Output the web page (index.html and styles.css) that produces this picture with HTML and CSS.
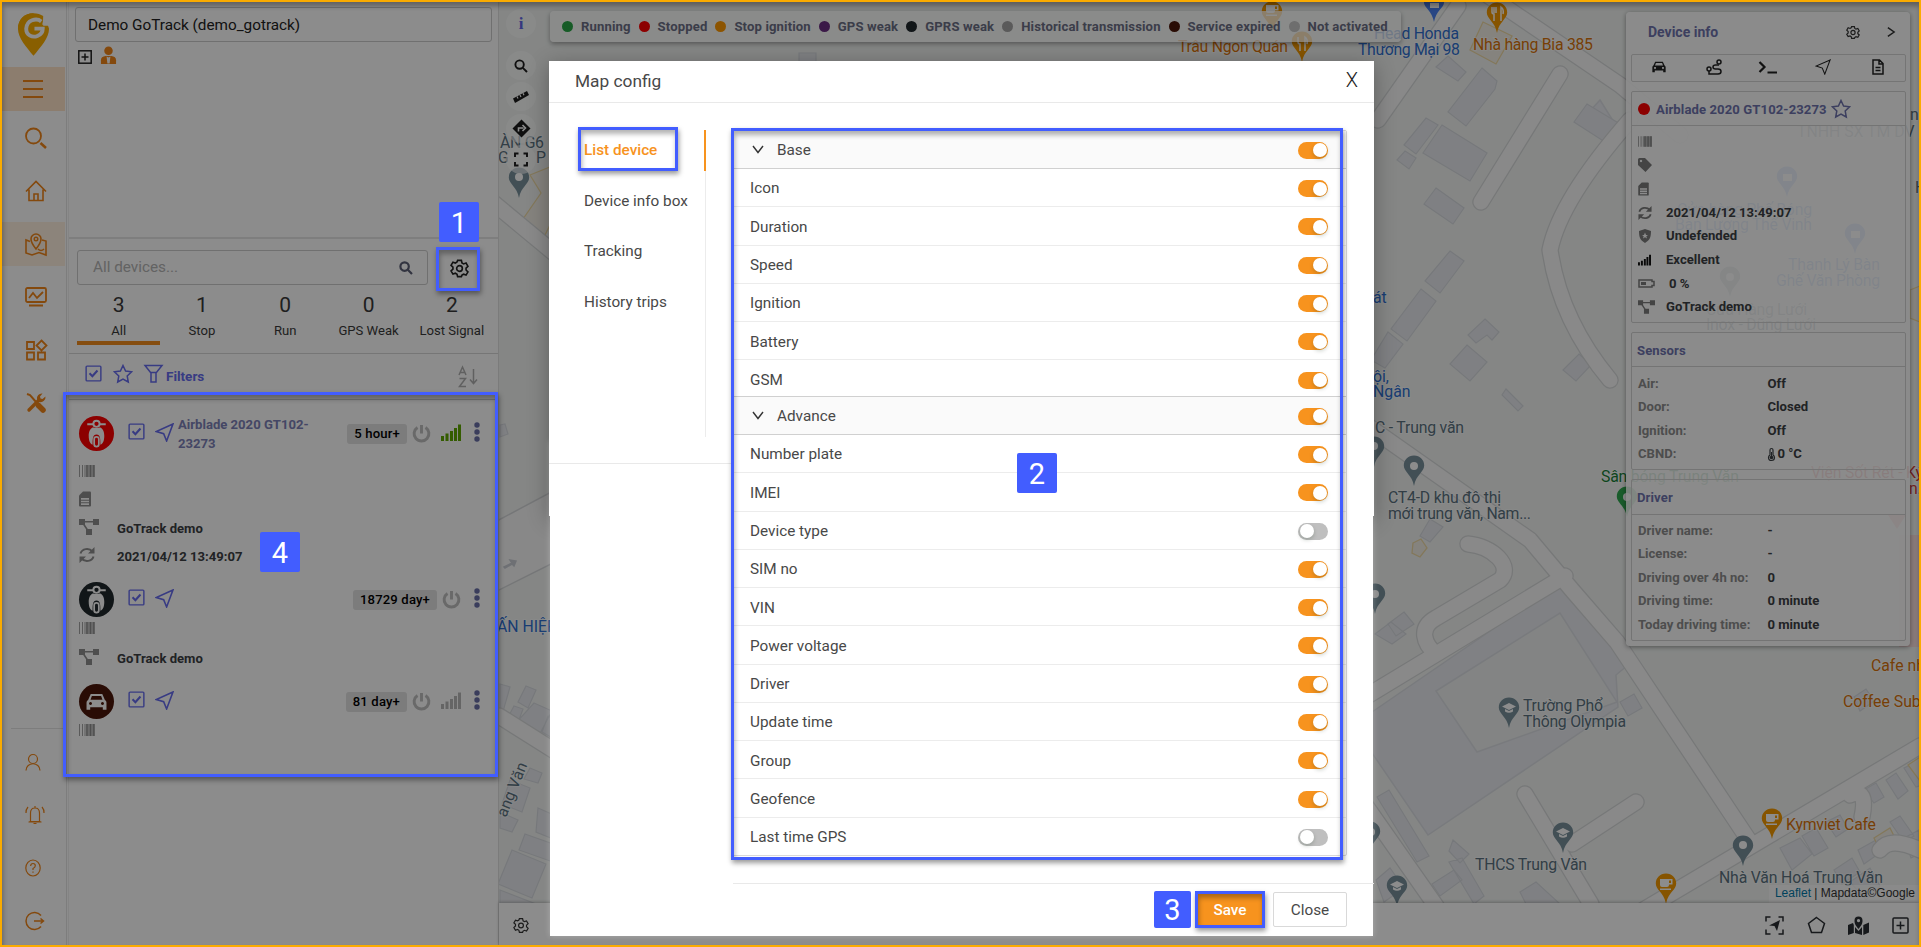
FILE: index.html
```html
<!DOCTYPE html>
<html lang="en">
<head>
<meta charset="utf-8">
<title>GoTrack - Map config</title>
<link rel="stylesheet" href="styles.css">
</head>
<body>
<svg class="defs" width="0" height="0">
  <defs>
    <symbol id="gear" viewBox="0 0 20 20"><path d="M8 1.5h4l.6 2.7 1.7 1 2.6-.9 2 3.400-2 1.900v2l2 1.900-2 3.400-2.600-.9-1.700 1L12 18.500H8l-.6-2.500-1.700-1-2.600.9-2-3.400 2-1.900v-2l-2-1.900 2-3.400 2.600.9 1.700-1z"/><circle cx="10" cy="10" r="3"/></symbol>
    <symbol id="check" viewBox="0 0 18 18"><rect x="1.200" y="1.200" width="15.600" height="15.600" rx="1"/><path d="M4.800 8.800l3 3 5.400-6" stroke-width="2.200"/></symbol>
    <symbol id="nav" viewBox="0 0 18 18"><path d="M17 1L1.200 8l7 2.200L11 17z"/></symbol>
    <symbol id="star" viewBox="0 0 20 20"><path d="M10 1.500l2.600 5.500 6 .8-4.400 4.200 1.100 6-5.300-2.900L4.700 18l1.100-6L1.400 7.800l6-.8z"/></symbol>
    <symbol id="glass" viewBox="0 0 14 14"><circle cx="5.600" cy="5.600" r="4.200"/><path d="M8.800 8.800l4.200 4.200"/></symbol>
    <symbol id="scooter" viewBox="0 0 36 36"><circle cx="18" cy="8" r="3.200" fill="none" stroke="#fff" stroke-width="2"/><path d="M8.500 8.500h6M21.500 8.500h6" stroke="#fff" stroke-width="2.200" fill="none"/><path d="M14.500 11.500c-4 2-4.500 6-4.500 9 0 4 1 8 4 9 0-6 0-10.500 4-10.500s4 4.500 4 10.500c3-1 4-5 4-9 0-3-.5-7-4.500-9-1.500 1.200-5.500 1.200-7 0z" fill="#fff"/><rect x="15.600" y="21.500" width="4.800" height="10" rx="2.400" fill="none" stroke="#fff" stroke-width="1.800"/></symbol>
    <symbol id="power" viewBox="0 0 18 18"><path d="M5.200 3.300a7 7 0 1 0 7.600 0M9 1v8"/></symbol>
    <symbol id="signal" viewBox="0 0 20 17"><path d="M1.500 17v-5M6 17V9.500M10.500 17V7M14.500 17V4M18.500 17V.5" stroke-width="3"/></symbol>
    <symbol id="dots" viewBox="0 0 6 20"><circle cx="3" cy="3" r="2.700"/><circle cx="3" cy="10" r="2.700"/><circle cx="3" cy="17" r="2.700"/></symbol>
    <symbol id="barcode" viewBox="0 0 16 12"><path d="M.5 0v12M3.500 0v12M6 0v12" stroke-width="1" opacity=".8"/><path d="M8 0v12M11.500 0v12M14.800 0v12" stroke-width="1.300"/><path d="M7 0h9v12H7z" fill="currentColor" opacity=".55" stroke="none"/></symbol>
    <symbol id="sim" viewBox="0 0 12 16"><path d="M4 .5h7q1 0 1 1v13q0 1-1 1H1q-1 0-1-1V4.500z"/><path d="M2 7h8v1.800H2zM2 9.800h8v1.500H2zM2 12.300h8V14H2z" fill="#fff"/></symbol>
    <symbol id="tree" viewBox="0 0 20 16"><path d="M0 0h6v6H0zM14 0h6v6h-6zM7 10h6v6H7z"/><path d="M5 2.800h10M4.500 5l4 6" fill="none" stroke="currentColor" stroke-width="1.600"/></symbol>
    <symbol id="sync" viewBox="0 0 16 16"><path d="M1.500 6.500C3 1.500 10 .5 13.500 4.500M14.500 9.500C13 14.500 6 15.500 2.500 11.500"/><path d="M15.500 0v6.500H9zM.5 16V9.500H7z" fill="currentColor" stroke="none"/></symbol>
    <symbol id="carfront" viewBox="0 0 20 16"><path fill-rule="evenodd" d="M4.500.5h11l2.500 5.500q1.500.8 1.500 2.500v7h-3.500V13h-12v2.500H.5v-7Q.5 6.800 2 6zM5.600 2.300L4.300 5.800h11.400l-1.300-3.500zM4.300 8a1.400 1.400 0 1 0 .01 0zM15.700 8a1.400 1.400 0 1 0 .01 0z"/></symbol>
    <symbol id="pin" viewBox="0 0 22 32"><path d="M11 .5C5 .5.800 5 .800 10.500.800 17 9 19.500 11 31c2-11.500 10.200-14 10.200-20.500C21.200 5 17 .5 11 .5z"/></symbol>
    <symbol id="cap" viewBox="0 0 14 10"><path d="M7 0l7 3.500L7 7 0 3.500zM3 6v2.500q4 2.500 8 0V6L7 8z"/></symbol>
    <symbol id="cup" viewBox="0 0 14 11"><path fill-rule="evenodd" d="M1 0h12.500v5.500H10V6q0 2-2 2H3Q1 8 1 6zM10 1.500v2.500h2V1.500zM1 9.500h11v1.500H1z"/></symbol>
  </defs>
</svg>

<div class="app">
  <nav class="rail">
    <svg class="logo" viewBox="0 0 34 46"><path d="M17 1C7 1 1 8 1 17c0 10 9 19 16 28 7-9 16-18 16-28L32 14H17z" fill="#faad00"/><path d="M1 17C1 8 7 1 17 1q6 0 10 3v12L17 28z" fill="#faad00"/><path d="M25 9.500C20 5.500 10 8 9.500 17c0 7 6.500 9.500 11.500 7.500 4-1.500 5.500-4.500 5.500-7.500H18" fill="none" stroke="#fff" stroke-width="4"/><path d="M28 3l5 10h-7z" fill="#fff"/></svg>
    <div class="rail-toggle"><svg width="22" height="20" viewBox="0 0 22 20"><path d="M1 2h20M1 10h20M1 18h20"/></svg></div>
    <div class="rail-menu">
      <div class="rail-item"><svg width="22" height="22" viewBox="0 0 22 22"><circle cx="8.500" cy="9" r="7.500"/><path d="M15.500 16l5.500 5" stroke-width="2.500"/></svg></div>
      <div class="rail-item"><svg width="22" height="22" viewBox="0 0 22 22"><path d="M1 11.500L11 1.500l10 10M4 9.500V20.500h14V9.500M9 20v-6h4v6" stroke-width="1.600"/></svg></div>
      <div class="rail-item rail-item-active"><svg width="24" height="24" viewBox="0 0 24 24"><path d="M6 9.500L2 8v13l6 2 7-2.500 7 2.500V9l-4-1M12 17C8 12 7 10 7 7a5 5 0 0 1 10 0c0 3-1 5-5 10zM14 17q3 3 6 0" stroke-width="1.600"/><circle cx="12" cy="7" r="1.800" stroke-width="1.400"/></svg></div>
      <div class="rail-item"><svg width="22" height="20" viewBox="0 0 22 20"><rect x="1" y="1" width="20" height="14" rx="1.500"/><path d="M4 11l4-5 4 5 6-6M4 18.500h14" stroke-width="1.800"/></svg></div>
      <div class="rail-item"><svg width="22" height="22" viewBox="0 0 22 22"><path d="M2 3h7v7H2zM2 13.500h7v7H2zM13 13.500h7v7h-7zM16.500 1.500l5 5-5 5-5-5z"/></svg></div>
      <div class="rail-item"><svg width="20" height="20" viewBox="0 0 20 20"><path d="M3 17L13 7" stroke-width="3.400" stroke-linecap="round"/><path d="M11 6.500a5 5 0 0 1 5.500-6L14 3.500l.5 2 2 .5L19.500 3.500a5 5 0 0 1-6 5.500z" fill="currentColor" stroke="none"/><path d="M1 1l3 1 6.500 7.500" stroke-width="2"/><path d="M12.500 12.500l4.500 4.500" stroke-width="5.500" stroke-linecap="round"/></svg></div>
    </div>
    <div class="rail-foot">
      <svg width="16" height="18" viewBox="0 0 16 18"><circle cx="8" cy="6" r="4.500"/><path d="M1 17.500C1 8.500 15 8.500 15 17.500"/></svg>
      <svg width="20" height="20" viewBox="0 0 20 20"><path d="M10 1v2M4.500 16.500h11M5.500 16V8q0-5 4.500-5t4.500 5v8M3.500 17h13M8.500 18.500h3M3 2Q.5 5 1 8M17 2q2.500 3 2 6"/></svg>
      <svg width="16" height="18" viewBox="0 0 16 18"><ellipse cx="8" cy="9" rx="7.200" ry="8"/><path d="M5.600 7Q5.800 4.500 8 4.500q2.300 0 2.300 2.200Q10.300 8.300 8 9.500V11M8 12.500v1.300"/></svg>
      <svg width="20" height="20" viewBox="0 0 20 20"><path d="M16 4.500a8.500 8.500 0 1 0 0 11M9 10h9.500M15.500 7.500L18.500 10l-3 2.500" stroke-width="1.500"/></svg>
    </div>
  </nav>

  <aside class="side">
    <section class="accounts">
      <div class="account-box">Demo GoTrack (demo_gotrack)</div>
      <div class="account-tree">
        <svg width="14" height="14" viewBox="0 0 14 14" class="ink"><rect x=".8" y=".8" width="12.400" height="12.400"/><path d="M7 3.500v7M3.500 7h7"/></svg>
        <svg width="17" height="19" viewBox="0 0 18 19" class="person"><circle cx="9" cy="4.500" r="4.500"/><path d="M1 18.500v-4Q1 10.500 6 10h6q5 .5 5 4.500v4z"/><path d="M7 10.500l2 1 2-1-.8 7.500H7.800z" fill="#fff"/></svg>
      </div>
    </section>
    <section class="finder">
      <div class="search-row">
        <div class="search"><span>All devices...</span><svg width="14" height="14"><use href="#glass"/></svg></div>
        <svg class="gear-btn" width="19" height="19"><use href="#gear"/></svg>
      </div>
      <div class="stats">
        <div class="stat stat-on"><b>3</b><span>All</span></div>
        <div class="stat"><b>1</b><span>Stop</span></div>
        <div class="stat"><b>0</b><span>Run</span></div>
        <div class="stat"><b>0</b><span>GPS Weak</span></div>
        <div class="stat"><b>2</b><span>Lost Signal</span></div>
      </div>
    </section>
    <div class="filters">
      <svg width="17" height="17"><use href="#check"/></svg>
      <svg width="20" height="20"><use href="#star"/></svg>
      <svg width="19" height="19" viewBox="0 0 19 19"><path d="M1 1.500h17l-6 7.500v9H7V9zM6.500 8.500h6"/></svg>
      <span>Filters</span>
      <svg class="sort" width="20" height="22" viewBox="0 0 20 22"><path d="M1 9L4.500 1 8 9M2 6.500h5M1.500 12.500h6l-6 8h6.500M15.500 3v14M12 13.500l3.500 4 3.500-4"/></svg>
    </div>
    <div class="devices">
      <div class="device">
        <div class="device-head">
          <span class="avatar red"><svg width="35" height="35"><use href="#scooter"/></svg></span>
          <svg class="ico-line" width="17" height="17"><use href="#check"/></svg>
          <svg class="ico-nav" width="19" height="19"><use href="#nav"/></svg>
          <span class="device-name">Airblade 2020 GT102-23273</span>
          <span class="badge">5 hour+</span>
          <svg class="ico-power" width="19" height="19"><use href="#power"/></svg>
          <svg class="ico-signal on" width="20" height="17"><use href="#signal"/></svg>
          <svg class="ico-dots" width="6" height="20"><use href="#dots"/></svg>
        </div>
        <div class="drow"><svg class="bar" width="16" height="12"><use href="#barcode"/></svg></div>
        <div class="drow"><svg width="12" height="16"><use href="#sim"/></svg></div>
        <div class="drow"><svg width="20" height="16"><use href="#tree"/></svg><b>GoTrack demo</b></div>
        <div class="drow"><svg class="sync" width="16" height="16"><use href="#sync"/></svg><b>2021/04/12 13:49:07</b></div>
      </div>
      <div class="device device-2">
        <div class="device-head">
          <span class="avatar black"><svg width="35" height="35"><use href="#scooter"/></svg></span>
          <svg class="ico-line" width="17" height="17"><use href="#check"/></svg>
          <svg class="ico-nav" width="19" height="19"><use href="#nav"/></svg>
          <span class="device-name"></span>
          <span class="badge">18729 day+</span>
          <svg class="ico-power" width="19" height="19"><use href="#power"/></svg>
          <svg class="ico-dots" width="6" height="20"><use href="#dots"/></svg>
        </div>
        <div class="drow"><svg class="bar" width="16" height="12"><use href="#barcode"/></svg></div>
        <div class="drow"><svg width="20" height="16"><use href="#tree"/></svg><b>GoTrack demo</b></div>
      </div>
      <div class="device device-3">
        <div class="device-head">
          <span class="avatar brown"><svg width="21" height="20"><use href="#carfront"/></svg></span>
          <svg class="ico-line" width="17" height="17"><use href="#check"/></svg>
          <svg class="ico-nav" width="19" height="19"><use href="#nav"/></svg>
          <span class="device-name"></span>
          <span class="badge">81 day+</span>
          <svg class="ico-power" width="19" height="19"><use href="#power"/></svg>
          <svg class="ico-signal" width="20" height="17"><use href="#signal"/></svg>
          <svg class="ico-dots" width="6" height="20"><use href="#dots"/></svg>
        </div>
        <div class="drow"><svg class="bar" width="16" height="12"><use href="#barcode"/></svg></div>
      </div>
    </div>
  </aside>

  <main class="stage">
    <div class="map">
      <svg class="map-canvas" width="1420" height="901" viewBox="499 2 1420 901">
        <rect x="499" y="2" width="1420" height="901" fill="#f2f5f3" stroke="none"/>
        <g class="campus">
          <path d="M1372 712l188-129 68 82-12 10 2 32-190 128-56-82z"/>
          <path d="M1436 691l124-78 57 89-140 50z" class="land"/>
          <path d="M1899 535h21v112h-21z" class="pink"/>
          <path d="M1600 100l22 35-12 9-30-22z"/>
        </g>
        <g class="bld">
          <path d="M1448 56l18 16-8 9-22-14zM1482 68l15 13-2 8-29 37-18-14zM1426 118l12 7-22 29-12-9zM1442 125l45 28-17 28-47-28zM1405 151l11 7-7 11-12-9zM1436 188l28 20-11 16-29-20zM1450 251l14 10-24 32-15-12zM1421 289l15 12-29 40-16-12zM1388 332l15 12-18 24-14-8zM1587 104l33 20-12 20-34-22z"/>
          <path d="M1485 319l14 13-7 8-5-5-11 8-8-8zM1467 345l20 17-17 19-20-17zM1579 354l12 11-15 16-13-11zM1506 389l17 17-5 5-16-16zM1430 519l13 8-13 15-10-6zM1391 622l15 12-14 10-17-10zM1404 612l10 12-18 12-8-12z"/>
          <path d="M1389 790l40 66-12 6-40-65zM1453 840l16 14-9 9-11-12zM1449 862l13-4 22 38-10 8zM1432 884l22-14 8 10-22 16zM1620 702l14-8 8 14-14 8zM1376 880l14-12 14 20-20 14zM1520 892l16-10 24 22h-34zM1780 848l20-10 12 16-20 16zM1802 836l14-8 12 20-14 8zM1826 822l14-7 8 14-12 8zM1834 870l18-12 8 14-18 12zM1858 850l18-10 8 10-20 14zM1864 790l12-7 8 14-10 6zM1886 780l10-7 12 18-10 8zM1904 768l10-5 8 22-6 2zM1890 822l10-6 14 20-10 6zM1904 838l15-8v24l-8 4zM1854 697l12-8 8 12-14 10zM1850 882l20-14 10 18-14 14z"/>
          <path d="M799 53h17v14h-17zM500 425l5-1 3 10-8 3zM526 686l10 4-8 18-10-6zM514 706l9 3-6 16-10-6zM534 703l18 8-14 26-24-12zM548 716l8 4v20l-14-8zM500 684l10 3-8 28h-2zM530 768l12 5-4 10-14-4zM510 780l20 8-8 24-20-8zM538 808l18 8v24l-20-8zM525 834l28 10v18l-34-12zM512 850l34 14-14 34-34-14zM500 890l36 14h-36zM500 812l18 8-6 12-12-4z"/>
        </g>
        <g class="yellow"><path d="M1483 22l29 14-16 28-26-14zM1413 543l8-4 6 9-7 9-8-4zM1874 838l16-10 5 10-16 10zM530 175l11 18-18 26 22 16 10-20v-50zM1910 290l10-4v36l-10-4zM1908 765l12-8v24z"/></g>
        <path class="lane" d="M495 522l60-32v72l-60 30z"/>
        <g class="road-edge">
          <path d="M1458 6L1378 120M1480 -10l140 95 60 50M1560 74l-79 128M1365 424l165 116 42 50 45 52 133 200M1468 544c24 2 46 22 32 36l-64 38c-18 10-12 26 0 36M1367 696l198-120M1366 806l70 100M1525 794l66 110M1572 844l64-42"/>
          <path d="M1640 912l280-166M1850 795q18-8 12 22M1880 850q10-14 40 0M490 200l70 58M499 716l70 44M1610 380q-50-60-60-130 10-50 80-130"/>
        </g>
        <g class="road">
          <path d="M1458 6L1378 120M1480 -10l140 95 60 50M1560 74l-79 128M1365 424l165 116 42 50 45 52 133 200M1468 544c24 2 46 22 32 36l-64 38c-18 10-12 26 0 36M1367 696l198-120M1366 806l70 100M1525 794l66 110M1572 844l64-42"/>
          <path d="M1640 912l280-166M1850 795q18-8 12 22M1880 850q10-14 40 0M490 200l70 58M499 716l70 44M1610 380q-50-60-60-130 10-50 80-130"/>
        </g>
        <g class="poi slate">
          <use href="#pin" x="508" y="167" width="22" height="32"/><use href="#pin" x="1363" y="436" width="22" height="32"/><use href="#pin" x="1403" y="455" width="22" height="32"/><use href="#pin" x="1364" y="583" width="22" height="32"/><use href="#pin" x="1498" y="697" width="22" height="32"/><use href="#pin" x="1552" y="822" width="22" height="32"/><use href="#pin" x="1359" y="821" width="22" height="32"/><use href="#pin" x="1386" y="875" width="22" height="32"/><use href="#pin" x="1732" y="835" width="22" height="32"/><use href="#pin" x="1719" y="266" width="22" height="32"/>
        </g>
        <g class="poi amber"><use href="#pin" x="1261" y="1" width="22" height="32"/><use href="#pin" x="1291" y="31" width="22" height="32"/><use href="#pin" x="1486" y="2" width="22" height="32"/><use href="#pin" x="1761" y="808" width="22" height="32"/><use href="#pin" x="1655" y="873" width="22" height="32"/></g>
        <g class="poi blue"><use href="#pin" x="1423" y="-9" width="22" height="32"/><use href="#pin" x="1776" y="166" width="22" height="32"/><use href="#pin" x="1844" y="223" width="22" height="32"/></g>
        <g class="poi green"><use href="#pin" x="1616" y="486" width="22" height="32"/></g>
        <path d="M1888 515h18l-9 14z" fill="#f08080" stroke="none"/>
        <g fill="#fff" stroke="none">
          <circle cx="519" cy="177" r="4"/><circle cx="1374" cy="446" r="4"/><circle cx="1414" cy="466" r="4"/><circle cx="1375" cy="594" r="4"/><circle cx="1743" cy="845" r="4"/><circle cx="1371" cy="832" r="4"/><circle cx="1627" cy="497" r="4"/><circle cx="1730" cy="277" r="4"/>
          <use href="#cap" x="1502" y="703" width="14" height="10"/><use href="#cap" x="1556" y="828" width="14" height="10"/><use href="#cap" x="1390" y="881" width="14" height="10"/>
          <use href="#cup" x="1765" y="814" width="14" height="11"/><use href="#cup" x="1659" y="879" width="14" height="11"/><use href="#cup" x="1265" y="5" width="14" height="11"/>
          <path d="M1430 3h9v5h-9zM1783 174h9v7h-9zM1851 231h9v7h-9z"/>
        </g>
        <path d="M1492 7v5q0 2 2 2v7M1494 7v6M1496 7v6M1501 21V7q3 2 2 7M1298 37v5q0 2 2 2v7M1305 51V37q3 2 2 7" fill="none" stroke="#fff" stroke-width="1.500"/>
        <path d="M504 567l8-4-2-3 6 1-2 5-2-2-7 4z" fill="#c9cdd4" stroke="#c9cdd4"/>
        <g class="lbl lbl-amber">
          <text x="1178" y="52" textLength="110">Trâu Ngon Quán</text><text x="1473" y="50" textLength="120">Nhà hàng Bia 385</text><text x="1786" y="830" textLength="90">Kymviet Cafe</text><text x="1871" y="671">Cafe nhà</text><text x="1843" y="707">Coffee Sub</text>
        </g>
        <g class="lbl lbl-blue">
          <text x="1374" y="39" textLength="85">Head Honda</text><text x="1358" y="55" textLength="102">Thương Mại 98</text><text x="1373" y="303">át</text><text x="1373" y="382">ội,</text><text x="1373" y="397">Ngân</text><text x="497" y="632">ẤN HIỆP</text>
          <text x="1677" y="215" textLength="135">Cửa hàng Phế Bóng</text><text x="1675" y="230" textLength="137">Bàn Lương Thế Vinh</text><text x="1788" y="270" textLength="92">Thanh Lý Bàn</text><text x="1776" y="286" textLength="104">Ghế Văn Phòng</text>
        </g>
        <g class="lbl lbl-slate">
          <text x="500" y="148" textLength="44">ÀN G6</text><text x="498" y="163">G</text><text x="536" y="163">P</text><text x="1375" y="433" textLength="89">C - Trung văn</text><text x="1388" y="503" textLength="113">CT4-D khu đô thị</text><text x="1388" y="519" textLength="143">mới trung văn, Nam...</text>
          <text x="1523" y="711" textLength="80">Trường Phổ</text><text x="1523" y="727" textLength="103">Thông Olympia</text><text x="1475" y="870" textLength="112">THCS Trung Văn</text><text x="1719" y="883" textLength="164">Nhà Văn Hoá Trung Văn</text>
          <text x="1706" y="315" textLength="101">Cửa Hàng Lưới</text><text x="1706" y="330" textLength="110">Inox - Dũng Lưới</text><text x="1797" y="137">TNHH SX TM DV L</text><text x="1910" y="120">ng</text><text x="1915" y="193">H</text>
          <text transform="translate(506 818) rotate(-68)">ang Văn</text>
        </g>
        <g class="lbl lbl-green"><text x="1601" y="482" textLength="138">Sân bóng Trung Văn</text></g>
        <g class="lbl lbl-red"><text x="1811" y="478" textLength="112">Viện Sốt Rét - Ký</text><text x="1909" y="494">n...</text></g>
      </svg>
      <div class="tools">
        <span class="tool tool-info">i</span>
        <span class="tool"><svg width="14" height="14"><use href="#glass"/></svg></span>
        <span class="tool"><svg width="18" height="14" viewBox="0 0 18 14"><path d="M1 8.500L15 1l2 4L3 13z" fill="currentColor" stroke="none"/><path d="M5 6.500l1 2M8 5l1 2M11 3.300l1 2" stroke="#fff" stroke-width="1.200"/></svg></span>
        <span class="tool"><svg width="19" height="19" viewBox="0 0 19 19"><path d="M9.500.5l9 9-9 9-9-9z" fill="currentColor" stroke="none"/><path d="M6.500 12.500V9h5M10.500 6l3 3-3 3" stroke="#fff" stroke-width="1.600"/></svg></span>
        <span class="tool"><svg width="14" height="15" viewBox="0 0 14 15"><path d="M1 5V1.500h3.500M9.500 1.500H13V5M13 10v3.500H9.500M4.500 13.500H1V10"/></svg></span>
      </div>
      <div class="legend">
        <span><i class="c-run"></i>Running</span><span><i class="c-stop"></i>Stopped</span><span><i class="c-ign"></i>Stop ignition</span><span><i class="c-gps"></i>GPS weak</span><span><i class="c-gprs"></i>GPRS weak</span><span><i class="c-hist"></i>Historical transmission</span><span><i class="c-exp"></i>Service expired</span><span><i class="c-not"></i>Not activated</span>
      </div>
      <div class="info">
        <div class="info-title"><b>Device info</b><svg width="14" height="15"><use href="#gear"/></svg><svg width="8" height="12" viewBox="0 0 9 12"><path d="M1 1l7 5-7 5"/></svg></div>
        <div class="info-tabs">
          <svg width="14" height="12" class="solid"><use href="#carfront"/></svg>
          <svg width="16" height="16" viewBox="0 0 16 16"><circle cx="3" cy="10" r="2"/><path d="M3 12v3h9q3 0 3-2.500T12 10H9.500Q7 10 7 8t2.500-2H13"/><circle cx="13" cy="3" r="2"/></svg>
          <svg width="20" height="14" viewBox="0 0 20 14"><path d="M1.500 2l5 5-5 5M9.500 12.500H19" stroke-width="2.200"/></svg>
          <svg width="16" height="16" class="thin"><use href="#nav"/></svg>
          <svg width="12" height="16" viewBox="0 0 12 16"><path d="M1 1h6.500L11 4.500V15H1zM7 1v4h4M3.500 8.500h5M3.500 11.500h5"/></svg>
        </div>
        <section class="card card-device">
          <header><i></i><b>Airblade 2020 GT102-23273</b><svg width="20" height="20"><use href="#star"/></svg></header>
          <div class="irow"><svg class="bar" width="14" height="11"><use href="#barcode"/></svg></div>
          <div class="irow"><svg width="14" height="14" viewBox="0 0 14 14"><path fill-rule="evenodd" d="M0 1.500Q0 0 1.500 0H7l7 7-6.500 7L0 7zM3 1.800a1.200 1.200 0 1 0 .01 0z"/></svg></div>
          <div class="irow"><svg width="11" height="14"><use href="#sim"/></svg></div>
          <div class="irow"><svg class="sync" width="14" height="14"><use href="#sync"/></svg><b>2021/04/12 13:49:07</b></div>
          <div class="irow"><svg width="14" height="14" viewBox="0 0 14 14"><path fill-rule="evenodd" d="M7 0l6 2c0 6-1 9-6 12C2 11 1 8 1 2zM7 3.500L6 6H4l1.700 1.300L5 9.500l2-1.300 2 1.300-.7-2.200L10 6H8z"/></svg><b>Undefended</b></div>
          <div class="irow"><svg class="sig" width="13" height="12"><use href="#signal"/></svg><b>Excellent</b></div>
          <div class="irow"><svg width="17" height="9" viewBox="0 0 17 9"><path d="M1 1h13v1.500h2v4h-2V8H1z" fill="none" stroke="currentColor" stroke-width="1.500"/><path d="M3 3h5v3H3z"/></svg><b class="pct">0 %</b></div>
          <div class="irow"><svg width="17" height="14"><use href="#tree"/></svg><b>GoTrack demo</b></div>
        </section>
        <section class="card card-sensors">
          <header><b>Sensors</b></header>
          <div class="kv"><span>Air:</span><b>Off</b></div>
          <div class="kv"><span>Door:</span><b>Closed</b></div>
          <div class="kv"><span>Ignition:</span><b>Off</b></div>
          <div class="kv"><span>CBND:</span><b><svg width="7" height="13" viewBox="0 0 7 13"><path d="M2 7V2q0-1.500 1.500-1.500T5 2v5q1.500 1 1.500 2.500 0 3-3 3t-3-3Q.5 8 2 7z" fill="none" stroke="currentColor" stroke-width="1.200"/><circle cx="3.500" cy="9.500" r="1.800"/><path d="M3 4h1v5H3z"/></svg>0 °C</b></div>
        </section>
        <section class="card card-driver">
          <header><b>Driver</b></header>
          <div class="kv"><span>Driver name:</span><b>-</b></div>
          <div class="kv"><span>License:</span><b>-</b></div>
          <div class="kv"><span>Driving over 4h no:</span><b>0</b></div>
          <div class="kv"><span>Driving time:</span><b>0 minute</b></div>
          <div class="kv"><span>Today driving time:</span><b>0 minute</b></div>
        </section>
      </div>
      <div class="credit"><a>Leaflet</a> | Mapdata©Google</div>
    </div>
    <footer class="bottom">
      <svg class="bottom-gear" width="16" height="17"><use href="#gear"/></svg>
      <svg width="19" height="19" viewBox="0 0 19 19"><path d="M1 5.500V1h4.500M13.500 1H18v4.500M18 13.500V18h-4.500M5.500 18H1v-4.500"/><path d="M15 4l-3 11-2.500-5L4 9.500z" fill="currentColor" stroke="none"/></svg>
      <svg width="19" height="18" viewBox="0 0 19 18"><path d="M9.500 1.500l8 6-3 9h-10l-3-9z"/></svg>
      <svg width="21" height="19" viewBox="0 0 21 19"><path fill-rule="evenodd" stroke="none" fill="currentColor" d="M10.500 13C7 9 6.500 7 6.500 4.500a4 4 0 0 1 8 0C14.500 7 14 9 10.500 13zM10.500 3a1.600 1.600 0 1 0 .01 0zM5 7l.8 2V17L0 19V9zM7 11l3.500 4 3.500-4v8l-7-2zM15.300 9L21 6.500v10L15.300 19z"/></svg>
      <svg width="17" height="17" viewBox="0 0 17 17"><rect x="1" y="1" width="15" height="15" rx="1"/><path d="M8.500 4.500v8M4.500 8.500h8"/></svg>
    </footer>
  </main>
</div>

<div class="mask"></div>

<div class="modal">
  <header class="modal-head"><span>Map config</span><span class="modal-x">X</span></header>
  <div class="modal-body">
    <div class="tabs">
      <div class="tabs-list"><div class="tab tab-on">List device</div><div class="tab">Device info box</div><div class="tab">Tracking</div><div class="tab">History trips</div></div>
    </div>
    <div class="panel">
      <div class="group-head"><svg width="12" height="9" viewBox="0 0 12 9"><path d="M1 1l5 6.500L11 1"/></svg><span>Base</span><i class="sw"></i></div>
      <div class="rows rows-base">
        <div class="row"><span>Icon</span><i class="sw"></i></div>
        <div class="row"><span>Duration</span><i class="sw"></i></div>
        <div class="row"><span>Speed</span><i class="sw"></i></div>
        <div class="row"><span>Ignition</span><i class="sw"></i></div>
        <div class="row"><span>Battery</span><i class="sw"></i></div>
        <div class="row"><span>GSM</span><i class="sw"></i></div>
      </div>
      <div class="group-head"><svg width="12" height="9" viewBox="0 0 12 9"><path d="M1 1l5 6.500L11 1"/></svg><span>Advance</span><i class="sw"></i></div>
      <div class="rows rows-adv">
        <div class="row"><span>Number plate</span><i class="sw"></i></div>
        <div class="row"><span>IMEI</span><i class="sw"></i></div>
        <div class="row"><span>Device type</span><i class="sw off"></i></div>
        <div class="row"><span>SIM no</span><i class="sw"></i></div>
        <div class="row"><span>VIN</span><i class="sw"></i></div>
        <div class="row"><span>Power voltage</span><i class="sw"></i></div>
        <div class="row"><span>Driver</span><i class="sw"></i></div>
        <div class="row"><span>Update time</span><i class="sw"></i></div>
        <div class="row"><span>Group</span><i class="sw"></i></div>
        <div class="row"><span>Geofence</span><i class="sw"></i></div>
        <div class="row"><span>Last time GPS</span><i class="sw off"></i></div>
      </div>
    </div>
  </div>
  <footer class="modal-foot"><button class="btn btn-save">Save</button><button class="btn">Close</button></footer>
</div>

<div class="frame frame-gear"></div>
<div class="frame frame-list"></div>
<div class="frame frame-tab"></div>
<div class="frame frame-panel"></div>
<div class="frame frame-save"></div>
<div class="note note-1">1</div>
<div class="note note-2">2</div>
<div class="note note-3">3</div>
<div class="note note-4">4</div>
<div class="page-edge"></div>
</body>
</html>
```
FILE: styles.css
```css
* { box-sizing: border-box; }
body { margin: 0; width: 1921px; height: 947px; overflow: hidden; position: relative; background: #fff; font: 13.1px/1.2 Roboto, "Noto Sans", sans-serif; color: #222; }
svg { display: block; flex: none; overflow: visible; fill: none; stroke: currentColor; stroke-width: 1.5; }
.defs { position: absolute; }
.app { display: flex; width: 1921px; height: 947px; padding: 2px; }

/* Navigation rail */
.rail { width: 65px; flex: none; border-right: 1px solid #e4e4e4; display: flex; flex-direction: column; color: #f08519; }
.rail svg { stroke-width: 1.800; }
.logo { width: 33px; height: 45px; margin: 10px 0 0 15px; stroke: none; }
.rail-toggle { height: 44px; width: 63px; margin-top: 10px; background: #ffe3c8; display: flex; align-items: center; padding-left: 20px; }
.rail-menu { margin-top: 5px; display: flex; flex-direction: column; gap: 9px; }
.rail-item { height: 44px; width: 63px; display: flex; align-items: center; justify-content: center; padding-left: 5px; }
.rail-item-active { background: #fff1e0; }
.rail-foot { margin: auto 0 15px 9px; border-top: 1px solid #e4e4e4; height: 202px; padding: 24px 0 0 14px; display: flex; flex-direction: column; gap: 34px; }
.rail .rail-foot svg { stroke-width: 1.200; }

/* Device side panel */
.side { width: 431px; flex: none; margin-left: 1px; border-right: 1px solid #e0e0e0; border-left: 1px solid #f0f0f0; display: flex; flex-direction: column; }
.accounts { height: 237px; border-bottom: 2px solid #e6e6e6; padding: 5px 6px 0 6px; }
.account-box { height: 35px; border: 1px solid #ccc; border-radius: 3px; font-size: 15.300px; line-height: 34px; padding-left: 12px; }
.account-tree { display: flex; gap: 8px; padding: 4px 0 0 3px; align-items: center; }
.account-tree .person { fill: #f08519; stroke: none; }
.ink { margin-top: 3px; }
.finder { height: 115px; border-bottom: 1px solid #d8d8d8; padding: 11px 0 0 8px; }
.search-row { display: flex; align-items: center; gap: 22px; }
.search { width: 351px; height: 35px; border: 1px solid #ccc; border-radius: 3px; display: flex; justify-content: space-between; align-items: center; padding: 0 14px 0 15px; color: #b4b4b4; font-size: 15.300px; }
.search svg { color: #5b5f75; stroke-width: 2.200; }
.gear-btn { color: #222; stroke-width: 1.700; margin-top: 2px; }
.stats { display: grid; grid-template-columns: repeat(5, 83.300px); margin-top: 6px; }
.stat { height: 54px; display: flex; flex-direction: column; align-items: center; border-bottom: 4px solid transparent; white-space: nowrap; color: #3a3a3a; }
.stat b { font-weight: 400; font-size: 21px; line-height: 28px; }
.stat span { margin-top: 4px; }
.stat-on { border-bottom-color: #f28c1e; }
.filters { height: 46px; border-bottom: 1px solid #d0d0d0; display: flex; align-items: center; padding: 0 20px 6px 16px; color: #666cee; font-size: 13.500px; font-weight: 700; gap: 11px; }
.filters span { margin: 6px 0 0 -8px; }
.filters .sort { margin-left: auto; margin-top: 7px; color: #b0b0b0; }
.devices { padding: 16px 18px 0 10px; }
.device { height: 166px; }
.device-2 { height: 102px; }
.device-head { display: flex; height: 35px; align-items: flex-start; }
.avatar { width: 35px; height: 35px; border-radius: 50%; flex: none; display: flex; align-items: center; justify-content: center; }
.avatar svg { fill: #fff; stroke: none; }
.red { background: #ff0000; } .black { background: #20282c; } .brown { background: #4c170a; }
.ico-line { margin: 7px 0 0 14px; color: #666cee; }
.ico-nav { margin: 7px 0 0 10px; color: #666cee; }
.device-name { margin: -1px 0 0 4px; width: 150px; font-weight: 700; line-height: 19px; color: #7d81b8; }
.badge { margin: 8px 5px 0 auto; height: 20px; line-height: 19px; padding: 0 7px; border-radius: 3px; background: #e2e2e2; color: #000; font-weight: 500; letter-spacing: .15px; white-space: nowrap; }
.ico-power { margin-top: 8px; color: #c0c0c0; stroke-width: 2.800; }
.ico-signal { margin: 8px 0 0 10px; color: #b9b9b9; }
.ico-signal.on { color: #5fa800; }
.ico-dots { margin: 6px 0 0 13px; fill: #6a70a8; stroke: none; }
.drow { height: 28px; display: flex; align-items: center; color: #8f8f8f; }
.drow:nth-child(2) { margin-top: 6px; }
.drow svg { fill: currentColor; stroke: none; }
.drow .bar, .irow .bar { stroke: currentColor; }
.drow .sync, .irow .sync { fill: none; stroke: currentColor; stroke-width: 2; }
.drow b { color: #3c4044; font-weight: 700; margin-left: auto; width: 363px; padding-top: 4px; }
.device-2 .drow:nth-child(2), .device-3 .drow:nth-child(2) { margin-top: -3px; }
.device-2 .drow:nth-child(3) { margin-top: 1px; }

/* Map area */
.stage { flex: 1; display: flex; flex-direction: column; }
.map { position: relative; height: 901px; overflow: hidden; }
.map-canvas { position: absolute; left: 0; top: 0; overflow: hidden; }
.map-canvas .campus path { fill: #e9ebf1; stroke: #dcdfe4; }
.map-canvas .campus .land { fill: #eef1f0; }
.map-canvas .campus .pink { fill: #f9dede; stroke: none; }
.map-canvas .bld { fill: #e8eaef; stroke: #d8dbe0; stroke-width: 1.200; }
.map-canvas .yellow { fill: #f3efe6; stroke: #eed9a4; stroke-width: 1.300; }
.lane { fill: #f8f8f8; stroke: #d6d8da; }
.road-edge { stroke: #d8dadb; stroke-width: 17.500; stroke-linecap: round; stroke-linejoin: round; }
.road { stroke: #f9f9f9; stroke-width: 15px; stroke-linecap: round; stroke-linejoin: round; }
.poi { stroke: none; }
.slate { fill: #78909c; } .amber { fill: #f59a00; } .blue { fill: #4a80f0; } .green { fill: #2fa84f; }
.lbl { stroke: #fff; stroke-width: 2px; paint-order: stroke; stroke-opacity: .5; font-size: 15.800px; }
.lbl-amber { fill: #d9730a; } .lbl-blue { fill: #2f6fd0; } .lbl-slate { fill: #5b7280; } .lbl-green { fill: #188038; } .lbl-red { fill: #d04040; }
.tools { position: absolute; left: 7px; top: 7px; display: flex; flex-direction: column; gap: 2.200px; }
.tool { width: 30px; height: 29px; border-radius: 50%; background: rgba(255,255,255,.6); display: flex; align-items: center; justify-content: center; color: #1c1c1c; }
.tool svg { stroke-width: 1.900; }
.tool-info { height: 29px; color: #6266e8; font: 700 17px "Liberation Serif", serif; margin-bottom: 11px; }
.legend { position: absolute; left: 51px; top: 9px; height: 31px; width: 851px; border-radius: 4px; background: rgba(255,255,255,.75); box-shadow: 0 2px 5px rgba(0,0,0,.35); display: flex; align-items: center; padding-left: 12px; gap: 8px; font-weight: 700; letter-spacing: .13px; color: #6c6f86; white-space: nowrap; }
.legend span { display: flex; align-items: center; gap: 8px; }
.legend i { width: 11px; height: 11px; border-radius: 50%; }
.c-run { background: #28a745; } .c-stop { background: #ff0000; } .c-ign { background: #ff9900; } .c-gps { background: #6c2f83; } .c-gprs { background: #20282c; } .c-hist { background: #a5a5a5; } .c-exp { background: #4c170a; } .c-not { background: #c8c8c8; }

/* Device info card stack */
.info { position: absolute; left: 1127px; top: 10px; width: 284px; height: 634px; padding: 0 4px 0 5px; border-radius: 4px; background: rgba(255,255,255,.86); box-shadow: 0 1px 5px rgba(0,0,0,.4); color: #3c4044; }
.info-title { height: 42px; display: flex; align-items: center; padding: 0 11px 2px 17px; font-size: 14px; color: #6f74ae; }
.info-title svg { color: #333; margin-left: auto; stroke-width: 1.700; }
.info-title svg + svg { margin-left: 27px; }
.info-tabs { height: 28px; border: 1px solid #d5d5d5; border-radius: 2px; display: grid; grid-template-columns: repeat(5, 1fr); align-items: center; justify-items: center; color: #222; padding-bottom: 3px; }
.info-tabs .solid { fill: currentColor; stroke: none; }
.info-tabs .thin { stroke-width: 1.200; }
.card { border: 1px solid #d3d3d3; border-radius: 2px; margin-top: 9px; background: rgba(255,255,255,.3); }
.card header { height: 34px; border-bottom: 1px solid #d3d3d3; padding: 2px 0 0 5px; display: flex; align-items: center; color: #6f74ae; margin-bottom: 4px; letter-spacing: .1px; }
.card-device { height: 232px; }
.card-device header i { width: 12px; height: 12px; border-radius: 50%; background: #ff0000; margin: -2px 6px 0 1px; }
.card-device header svg { margin: -2px 0 0 4px; }
.irow { height: 23.600px; display: flex; align-items: center; padding-left: 6px; color: #7c7c7c; }
.irow svg { fill: currentColor; stroke: none; }
.irow .sig { fill: none; color: #111; stroke: currentColor; }
.irow b { color: #3c4044; margin-left: auto; width: 239px; }
.irow .pct { width: 236px; }
.card-sensors { height: 138px; }
.card-sensors header { margin-bottom: 5px; }
.card-driver { height: 162px; }
.card-driver header { height: 35px; margin-bottom: 4px; }
.kv { height: 23.400px; line-height: 24px; display: grid; grid-template-columns: 129.500px 1fr; padding-left: 6px; }
.kv span { color: #8d8d8d; font-weight: 700; }
.kv b { display: flex; align-items: center; gap: 3px; }
.kv svg circle, .kv svg path:last-child { fill: currentColor; stroke: none; }
.credit { position: absolute; right: 0; bottom: 0; height: 18px; padding: 0 4px 0 6px; background: rgba(255,255,255,.7); font: 12px/17px "Liberation Sans", sans-serif; color: #333; }
.credit a { color: #0078a8; }
.bottom { flex: 1; background: #fff; box-shadow: 0 -1px 3px rgba(0,0,0,.25); z-index: 1; display: flex; align-items: center; padding: 2px 10px 0 14px; gap: 22.600px; color: #2b2f33; }
.bottom-gear { margin-right: auto; color: #333; }

.mask { position: absolute; inset: 0; background: rgba(0,0,0,.45); z-index: 2; }

/* Modal */
.modal { position: absolute; z-index: 3; left: 549px; top: 61px; width: 825px; height: 875px; display: flex; flex-direction: column; font-size: 15.300px; color: #484848; }
.modal::before { content: ""; position: absolute; z-index: -1; left: 0; top: 0; width: 825px; height: 455px; background: #fff; box-shadow: 0 4px 20px rgba(0,0,0,.3); }
.modal::after { content: ""; position: absolute; z-index: -1; left: 1px; top: 380px; width: 823px; height: 495px; background: #fff; box-shadow: 0 0 6px rgba(255,255,255,.3); }
.modal-head { height: 42px; border-bottom: 1px solid #e9e9e9; display: flex; justify-content: space-between; align-items: center; padding: 0 16px 1px 26px; font-size: 17.300px; flex: none; }
.modal-x { font-size: 20px; font-weight: 300; color: #222; margin-top: -2px; }
.modal-body { flex: 1; display: flex; }
.tabs { width: 183px; height: 361px; border-bottom: 1px solid #e9e9e9; padding-top: 27px; }
.tabs-list { width: 157px; height: 307px; border-right: 1px solid #ececec; padding-left: 35px; display: flex; flex-direction: column; gap: 9.500px; }
.tab { height: 41px; line-height: 40px; white-space: nowrap; }
.tab-on { color: #f7931e; font-weight: 500; border-right: 2px solid #f7931e; margin-right: -1px; }
.panel { width: 615px; height: 726px; margin-top: 27px; border: 1px solid #d9d9d9; border-radius: 2px; }
.group-head { height: 38px; background: #fafafa; border-bottom: 1px solid #d0d0d0; display: flex; align-items: center; padding: 0 18px 0 19px; }
.group-head svg { color: #333; stroke-width: 1.400; margin-right: 13px; }
.group-head span { padding-top: 1px; }
.rows { display: flex; flex-direction: column; }
.rows-base { height: 228px; }
.rows-adv { height: 420px; }
.row { flex: 1; border-bottom: 1px solid #ececec; display: flex; align-items: center; justify-content: space-between; padding: 2px 18px 0 17px; }
.rows-base .row { flex: none; height: 38.300px; }
.rows-base .row:last-child { flex: 1; padding-top: 4px; border-bottom-color: #d0d0d0; }
.rows-adv .row:last-child { border-bottom: 0; }
.sw { width: 30px; height: 17px; border-radius: 9px; background: #f7931e; display: flex; justify-content: flex-end; padding: 1.500px; flex: none; }
.group-head .sw { margin: 1px 0 0 auto; }
.sw::before { content: ""; width: 14px; height: 14px; border-radius: 50%; background: #fff; box-shadow: 0 2px 4px rgba(0,35,11,.2); }
.sw.off { background: #bfbfbf; justify-content: flex-start; }
.modal-foot { height: 53px; flex: none; margin-left: 184px; border-top: 1px solid #e9e9e9; display: flex; justify-content: flex-end; gap: 8px; padding: 8px 27px 0 0; }
.btn { height: 35px; width: 74px; border: 1px solid #d9d9d9; border-radius: 2px; background: #fff; font: 15.300px Roboto, sans-serif; color: #484848; padding: 0; }
.btn-save { width: 70px; background: #f7931e; border-color: #f7931e; color: #fff; font-weight: 500; }

/* Callouts */
.frame { position: absolute; z-index: 4; border: 3px solid #425dff; box-shadow: 1px 3px 5px rgba(0,0,0,.4), inset 1px 4px 5px rgba(0,0,0,.3); }
.frame-gear { left: 436px; top: 247px; width: 44px; height: 44px; }
.frame-list { left: 63px; top: 392px; width: 435px; height: 385px; }
.frame-tab { left: 578px; top: 127px; width: 100px; height: 44px; }
.frame-panel { left: 731px; top: 128px; width: 612px; height: 732px; }
.frame-save { left: 1195px; top: 891px; width: 70px; height: 37px; }
.note { position: absolute; z-index: 5; width: 40px; height: 40px; border-radius: 2px; background: #425dff; color: #fff; font: 29px/42px Roboto, sans-serif; text-align: center; }
.note-1 { left: 439px; top: 202px; }
.note-2 { left: 1017px; top: 453px; }
.note-3 { left: 1154px; top: 891px; width: 37px; height: 37px; line-height: 38px; }
.note-4 { left: 260px; top: 532px; }
.page-edge { position: absolute; z-index: 6; inset: 0; border: 2px solid #faab00; box-shadow: inset 1px 4px 5px rgba(0,0,0,.3); }
```
